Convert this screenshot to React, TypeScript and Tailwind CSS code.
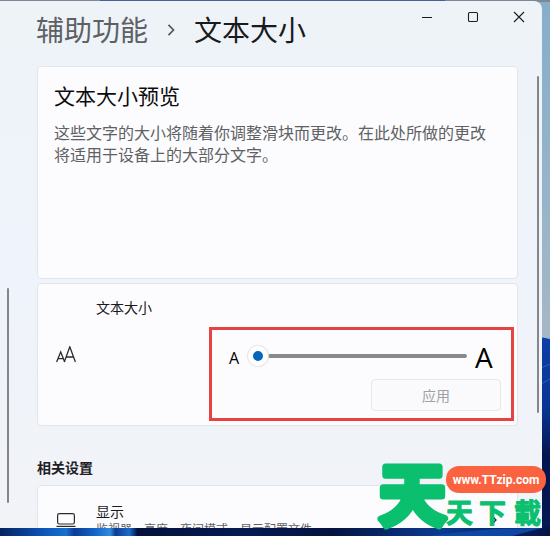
import type { ReactNode } from "react";

function Wallpaper() {
  return (
    <svg
      aria-hidden="true"
      className="absolute inset-0 -z-10 h-full w-full"
      viewBox="0 0 550 536"
      preserveAspectRatio="none"
    >
      <defs>
        <linearGradient id="sky" x1="0" y1="0" x2="0" y2="1">
          <stop offset="0" stopColor="#86aecb" />
          <stop offset="0.6" stopColor="#a3b7c6" />
        </linearGradient>
        <linearGradient id="bloom" x1="0" y1="0" x2="0" y2="1">
          <stop offset="0" stopColor="#0a3fa6" />
          <stop offset="0.35" stopColor="#0a3596" />
          <stop offset="0.6" stopColor="#03144f" />
          <stop offset="1" stopColor="#061a52" />
        </linearGradient>
        <linearGradient id="floor" x1="0" y1="0" x2="1" y2="0">
          <stop offset="0" stopColor="#05215f" />
          <stop offset="0.07" stopColor="#0b4fb0" />
          <stop offset="0.12" stopColor="#1670cf" />
          <stop offset="0.135" stopColor="#0a3c94" />
          <stop offset="0.17" stopColor="#1262c4" />
          <stop offset="0.2" stopColor="#2f8be0" />
          <stop offset="0.21" stopColor="#0d3c90" />
          <stop offset="0.235" stopColor="#1b6cca" />
          <stop offset="0.25" stopColor="#03113d" />
          <stop offset="0.45" stopColor="#061a52" />
          <stop offset="0.6" stopColor="#04123f" />
          <stop offset="0.8" stopColor="#0b3a92" />
          <stop offset="1" stopColor="#051447" />
        </linearGradient>
      </defs>
      <rect width="550" height="536" fill="url(#sky)" />
      <rect width="550" height="2" fill="#7d8798" />
      <rect x="100" width="345" height="2" fill="#41639c" />
      <path d="M540 337l10 2v197h-10z" fill="url(#bloom)" />
      <path d="M541 368l9-4M541 384l9-5" stroke="#2a62bd" strokeWidth="1" />
      <rect y="527" width="550" height="9" fill="url(#floor)" />
      <path d="M430 536q60-9 112-8l-30 8z" fill="#0d46a5" />
    </svg>
  );
}

function CaptionButton({ label, children }: { label: string; children: ReactNode }) {
  return (
    <button type="button" aria-label={label} className="flex h-8 w-[46px] items-center justify-center">
      <svg width="12" height="12" viewBox="0 0 12 12" fill="none" stroke="#1b1c1e" strokeWidth="1.1">
        {children}
      </svg>
    </button>
  );
}

function Header() {
  return (
    <header className="flex items-start">
      <nav className="flex flex-1 items-center whitespace-nowrap pl-9 pt-[7px] text-[28px] leading-[42px]">
        <a href="#accessibility" className="text-[#5d6064]">
          辅助功能
        </a>
        <svg className="mx-[18px] shrink-0" width="10" height="14" viewBox="0 0 10 14" fill="none" stroke="#54575b" strokeWidth="1.7">
          <path d="M2.5 2.8L7.5 8l-5 5.2" />
        </svg>
        <h1 className="text-[#191a1c]">文本大小</h1>
      </nav>
      <div className="flex">
        <CaptionButton label="最小化">
          <path d="M1 6.5h10" />
        </CaptionButton>
        <CaptionButton label="最大化">
          <rect x="1.5" y="1.5" width="9" height="9" rx="1.2" />
        </CaptionButton>
        <CaptionButton label="关闭">
          <path d="M1 1l10 10M11 1L1 11" />
        </CaptionButton>
      </div>
    </header>
  );
}

function PreviewCard() {
  return (
    <section className="h-[213px] rounded border border-[#e2e5ea] bg-[#fcfcfe] px-4 pt-[14px]">
      <h2 className="text-[21px] leading-7 text-[#0c0c0e]">文本大小预览</h2>
      <p className="mt-3 text-base leading-[22px] text-[#606164]">
        这些文字的大小将随着你调整滑块而更改。在此处所做的更改将适用于设备上的大部分文字。
      </p>
    </section>
  );
}

function TextSizeCard() {
  return (
    <section className="flex items-center gap-5 rounded border border-[#e2e5ea] bg-[#fcfcfe] pl-[18px] pr-[3px]">
      <svg className="shrink-0" width="20" height="18" viewBox="0 0 20 18" fill="none" stroke="#2b2b2d" strokeWidth="1.3">
        <path d="M0.6 16L4.7 6l4 10M2 12.6h5.4" />
        <path d="M8.3 16L13.8 0.8 19.4 16M10 11h7.6" />
      </svg>
      <div className="flex-1 pb-1 pt-[13px]">
        <label htmlFor="text-size" className="block text-sm leading-5 text-[#1a1a1c]">
          文本大小
        </label>
        <div className="ml-[113px] mt-[10px] border-3 border-[#e64242] pb-[7px] pt-[6px]">
          <div className="flex h-10 items-center pl-[17px] pr-4 font-['Open_Sans','Noto_Sans',sans-serif] text-black">
            <span className="mr-[7px] w-3 pt-1 text-base leading-5">A</span>
            <input
              id="text-size"
              type="range"
              min={100}
              max={225}
              defaultValue={100}
              className="h-5 min-w-0 flex-1 appearance-none bg-transparent [&::-webkit-slider-runnable-track]:h-1 [&::-webkit-slider-runnable-track]:rounded-full [&::-webkit-slider-runnable-track]:bg-[#88898b] [&::-webkit-slider-thumb]:-mt-2 [&::-webkit-slider-thumb]:size-5 [&::-webkit-slider-thumb]:appearance-none [&::-webkit-slider-thumb]:rounded-full [&::-webkit-slider-thumb]:border-5 [&::-webkit-slider-thumb]:border-solid [&::-webkit-slider-thumb]:border-white [&::-webkit-slider-thumb]:bg-[#0566bd] [&::-webkit-slider-thumb]:shadow-[0_0_1px_1px_#e4e5e8]"
            />
            <span className="ml-2 w-5 pt-[2px] text-[28px] leading-9">A</span>
          </div>
          <div className="mt-[3px] flex justify-end pr-[10px]">
            <button
              type="button"
              disabled
              className="h-8 w-[130px] rounded border border-[#e8e9ec] bg-[#fafafc] text-sm text-[#a0a1a4]"
            >
              应用
            </button>
          </div>
        </div>
      </div>
    </section>
  );
}

function DisplayCard() {
  return (
    <a
      href="#display"
      className="flex h-[70px] shrink-0 items-center rounded border border-[#e2e5ea] bg-[#fcfcfe] px-[18px]"
    >
      <svg className="mr-5 shrink-0" width="20" height="16" viewBox="0 0 20 16" fill="none" stroke="#2b2b2d" strokeWidth="1.2">
        <rect x="1.6" y="1.6" width="16.8" height="10.4" rx="1.8" />
        <path d="M0.5 14.4h19" />
      </svg>
      <span className="flex-1">
        <span className="block text-sm leading-[18px] text-[#1a1a1c]">显示</span>
        <span className="block text-xs leading-[18px] text-[#606164]">监视器、亮度、夜间模式、显示配置文件</span>
      </span>
      <svg width="10" height="10" viewBox="0 0 10 10" fill="none" stroke="#2b2b2d" strokeWidth="1.3">
        <path d="M3 1l4 4-4 4" />
      </svg>
    </a>
  );
}

function Watermark() {
  return (
    <svg
      aria-label="天天下載 www.TTzip.com"
      className="absolute bottom-0 right-0"
      width="176"
      height="80"
      viewBox="0 0 176 80"
      fill="#0abf6e"
      stroke="#0abf6e"
      strokeLinejoin="round"
      fontFamily="'Noto Sans CJK SC', sans-serif"
      fontWeight="700"
    >
      <text x="5" y="64" fontSize="67" strokeWidth="7">
        天
      </text>
      <text x="72 105 140" y="67" fontSize="27" strokeWidth="1">
        天下載
      </text>
      <rect x="72" y="10" width="100" height="27" rx="13" fill="#fb6340" stroke="none" />
      <text
        x="122"
        y="28"
        textAnchor="middle"
        fontSize="12"
        fontFamily="Roboto, sans-serif"
        fill="#ffffff"
        stroke="none"
      >
        www.TTzip.com
      </text>
    </svg>
  );
}

export default function App() {
  return (
    <div className="relative isolate h-screen overflow-hidden pb-2 pr-2 pt-px font-['Noto_Sans_CJK_SC',sans-serif]">
      <Wallpaper />
      <div className="relative flex h-full flex-col overflow-hidden rounded-tr-lg bg-linear-to-b from-[#eef3f8] via-[#eff3fb] to-[#f1f3f7]">
        <Header />
        <main className="ml-[37px] mr-6 mt-4 flex flex-col">
          <PreviewCard />
          <div className="mt-1">
            <TextSizeCard />
          </div>
          <h2 className="mb-2 mt-[31px] text-sm font-bold leading-5 text-[#1f2023]">相关设置</h2>
          <DisplayCard />
        </main>
        <div className="absolute left-[7px] top-[287px] h-[215px] w-[2px] rounded-full bg-[#858688]" />
        <div className="absolute right-[3px] top-[75px] h-[337px] w-[2px] rounded-full bg-[#858688]" />
      </div>
      <Watermark />
    </div>
  );
}
